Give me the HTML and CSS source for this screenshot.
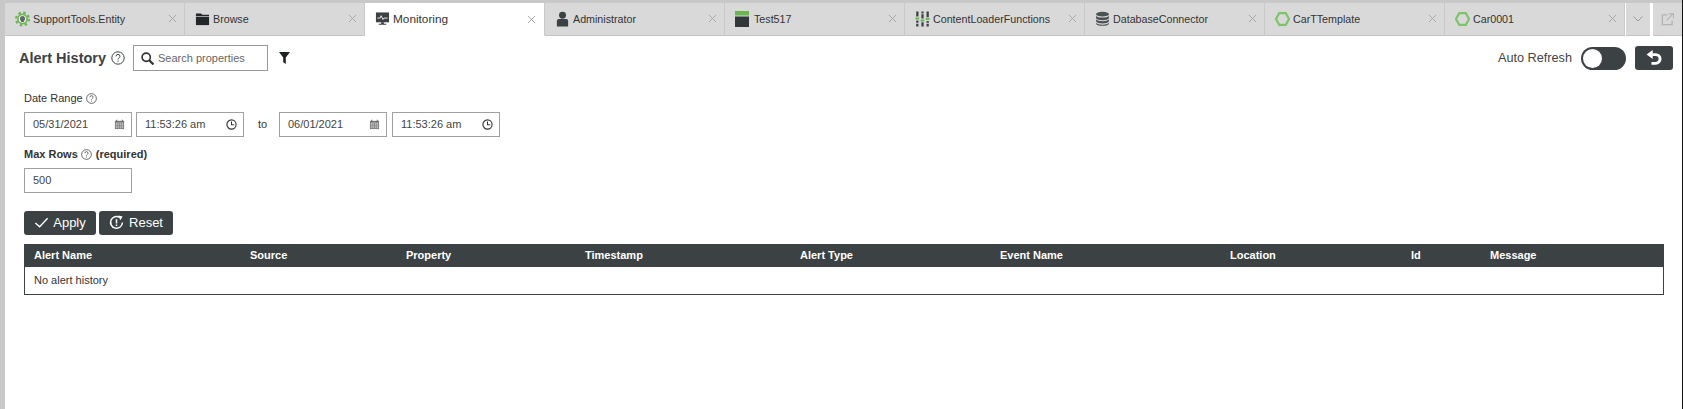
FILE: index.html
```html
<!DOCTYPE html>
<html lang="en">
<head>
<meta charset="utf-8">
<title>Alert History</title>
<link rel="stylesheet" href="styles.css">
</head>
<body>
<svg class="defs" width="0" height="0" aria-hidden="true">
  <symbol id="help" viewBox="0 0 14 14"><circle cx="7" cy="7" r="6.2" fill="none" stroke="currentColor" stroke-width="1"/><path d="M5 5.4a2 2 0 0 1 4 0c0 1.3-2 1.5-2 3" fill="none" stroke="currentColor" stroke-width="1"/><rect x="6.5" y="9.6" width="1" height="1.2" fill="currentColor"/></symbol>
  <symbol id="cal" viewBox="0 0 12 12"><path d="M1 2h10v9H1z" fill="#777"/><path d="M2 4h8v6H2z" fill="#ddd"/><path d="M2 5.500h8M2 7.200h8M2 8.800h8M4 4v6M6 4v6M8 4v6" stroke="#777" stroke-width=".7"/><path d="M3 .8v2M9 .8v2" stroke="#555"/></symbol>
  <symbol id="clock" viewBox="0 0 12 12"><circle cx="6" cy="6" r="5" fill="none" stroke="#333" stroke-width="1.200"/><path d="M6 2.800V6.300H8.800" fill="none" stroke="#333" stroke-width="1.100"/></symbol>
  <symbol id="x" viewBox="0 0 10 10"><path d="M1 1l8 8M9 1l-8 8" stroke="#a8a8a8" stroke-width="1.100" fill="none"/></symbol>
  <symbol id="hex" viewBox="0 0 16 16"><path d="M4.500 1.800h7L15 8l-3.500 6.200h-7L1 8z" fill="none" stroke="#7cc36a" stroke-width="2.300"/></symbol>
</svg>
<div class="tabs">
  <div class="tab"><svg class="ticon" viewBox="0 0 16 16"><circle cx="8" cy="8" r="6.800" fill="none" stroke="#6fb558" stroke-width="2.400" stroke-dasharray="2.700 2.640"/><circle cx="8" cy="8" r="5.800" fill="#6fb558"/><circle cx="8" cy="8" r="4" fill="#eef3ea"/><circle cx="8" cy="7.600" r="2.700" fill="#62686a"/><path d="M6.500 10h3v1.200h-3z" fill="#62686a"/></svg><span class="tname">SupportTools.Entity</span><svg class="tx"><use href="#x"/></svg></div>
  <div class="tab"><svg class="ticon" viewBox="0 0 16 16"><path d="M1 2h5.500l1.200 1.500H15v1.500H1z" fill="#23272a"/><path d="M1 5.800h14v8.700H1z" fill="#23272a"/></svg><span class="tname">Browse</span><svg class="tx"><use href="#x"/></svg></div>
  <div class="tab active"><svg class="ticon" viewBox="0 0 16 16"><path d="M1 1h14v10.500H1z" fill="#3c4244"/><path d="M2.500 7h3l1-2.500 2 4 1-1.500h4" fill="none" stroke="#fff" stroke-width=".9"/><path d="M6.500 11.500h3v1.500h2.500v1H4v-1h2.500z" fill="#3c4244"/></svg><span class="tname">Monitoring</span><svg class="tx"><use href="#x"/></svg></div>
  <div class="tab"><svg class="ticon" viewBox="0 0 16 16"><circle cx="8" cy="4" r="3.700" fill="#3c4244"/><path d="M2 16V10q0-2 2-2h8q2 0 2 2v6z" fill="#3c4244"/></svg><span class="tname">Administrator</span><svg class="tx"><use href="#x"/></svg></div>
  <div class="tab"><svg class="ticon wide" viewBox="0 0 14 16"><path d="M0 0h14v4.500H0z" fill="#6ab64f"/><path d="M0 5.500h14V16H0z" fill="#32383a"/></svg><span class="tname">Test517</span><svg class="tx"><use href="#x"/></svg></div>
  <div class="tab"><svg class="ticon" viewBox="0 0 16 16"><path d="M2.500 0v5.200M2.500 9.500V12M2.500 13v3M8 0v2M8 3v4.500M8 11.500V16M13.500 0v6M13.500 10v2M13.500 13v3" stroke="#3c4244" stroke-width="2.400"/><path d="M.5 7.400h4M6 9.500h4M11.500 8h4" stroke="#6ab64f" stroke-width="2.200"/></svg><span class="tname">ContentLoaderFunctions</span><svg class="tx"><use href="#x"/></svg></div>
  <div class="tab"><svg class="ticon" viewBox="0 0 16 16"><ellipse cx="8" cy="2.800" rx="6.800" ry="2.600" fill="#4b5052"/><path d="M1.200 4.400c1 2.800 12.600 2.800 13.600 0v2.800c-1 2.800-12.600 2.800-13.600 0zM1.200 8.300c1 2.800 12.600 2.800 13.600 0v2.400c-1 2.800-12.600 2.800-13.600 0zM1.200 11.900c1 2.800 12.600 2.800 13.600 0v1.300c-1 2.800-12.600 2.800-13.600 0z" fill="#4b5052"/></svg><span class="tname">DatabaseConnector</span><svg class="tx"><use href="#x"/></svg></div>
  <div class="tab"><svg class="ticon"><use href="#hex"/></svg><span class="tname">CarTTemplate</span><svg class="tx"><use href="#x"/></svg></div>
  <div class="tab"><svg class="ticon"><use href="#hex"/></svg><span class="tname">Car0001</span><svg class="tx"><use href="#x"/></svg></div>
  <div class="tabbtn"><svg class="chev" viewBox="0 0 10 6"><path d="M.5.500 5 5 9.500.5" fill="none" stroke="#999"/></svg></div>
  <div class="tabbtn last"><svg class="pop" viewBox="0 0 14 14"><path d="M7 2H1.500v10.500H12V8" fill="none" stroke="#b4b4b4" stroke-width="1.500"/><path d="M6 8l6.500-6.500M8.500 1h5v5" fill="none" stroke="#b4b4b4" stroke-width="1.200"/></svg></div>
</div>

<main class="content">
  <header class="titlebar">
    <h1 class="title">Alert History</h1>
    <svg class="help big"><use href="#help"/></svg>
    <div class="search">
      <svg class="mag" viewBox="0 0 12 12"><circle cx="4.800" cy="4.800" r="3.800" fill="none" stroke="#333" stroke-width="1.500"/><path d="M7.500 7.500 11.500 11.500" stroke="#333" stroke-width="2"/></svg>
      <span>Search properties</span>
    </div>
    <svg class="filter" viewBox="0 0 11 12"><path d="M0 0h11L6.800 5.500V12L4.200 10.200V5.500z" fill="#1f2324"/></svg>
    <span class="spacer"></span>
    <span class="autolabel">Auto Refresh</span>
    <div class="toggle"><span class="knob"></span></div>
    <button class="iconbtn" type="button"><svg viewBox="0 0 14 14"><path d="M3.800 3.800H8a3.600 3.600 0 0 1 0 7.200H4.500" fill="none" stroke="#fff" stroke-width="2.400"/><path d="M5.500 0v7.500L.5 3.800z" fill="#fff"/></svg></button>
  </header>

  <section class="form">
    <div class="label first">Date Range <svg class="help"><use href="#help"/></svg></div>
    <div class="dates">
      <div class="field">05/31/2021<svg class="ficon"><use href="#cal"/></svg></div>
      <div class="field">11:53:26 am<svg class="ficon"><use href="#clock"/></svg></div>
      <span class="to">to</span>
      <div class="field">06/01/2021<svg class="ficon"><use href="#cal"/></svg></div>
      <div class="field">11:53:26 am<svg class="ficon"><use href="#clock"/></svg></div>
    </div>
    <div class="label second">Max Rows <svg class="help"><use href="#help"/></svg> <span class="req">(required)</span></div>
    <div class="field rows">500</div>
    <div class="actions">
      <button class="btn apply" type="button"><svg viewBox="0 0 16 12"><path d="M1.500 6.500 6 10.500 14.500 1.500" fill="none" stroke="#fff" stroke-width="1.500"/></svg>Apply</button>
      <button class="btn reset" type="button"><svg class="reseticon" viewBox="0 0 16 16"><path d="M11.500 2.600A6.300 6.300 0 1 0 14.300 8" fill="none" stroke="#fff" stroke-width="1.600"/><path d="M10 .5 14.500 1.500 12 5.500z" fill="#fff"/><path d="M8 4.500v4.500M8 10.200v1.500" stroke="#fff" stroke-width="1.600"/></svg>Reset</button>
    </div>
  </section>

  <section class="table">
    <div class="thead">
      <span>Alert Name</span><span>Source</span><span>Property</span><span>Timestamp</span><span>Alert Type</span><span>Event Name</span><span>Location</span><span>Id</span><span>Message</span>
    </div>
    <div class="tbody">No alert history</div>
  </section>
</main>
</body>
</html>
```
FILE: styles.css
```css
* { box-sizing: border-box; }
html, body { height: 100%; }
body {
  margin: 0;
  background: #fff;
  border-left: 5px solid #c8c8c8;
  border-right: 1px solid #111;
  font-family: "Liberation Sans", Arial, sans-serif;
  font-size: 11px;
  color: #333;
  overflow: hidden;
}
.defs { display: block; height: 0; }
.tabs {
  display: flex;
  height: 36px;
  background: #fff;
  border-top: 3px solid #c8c8c8;
}
.tab {
  width: 180px;
  flex: none;
  display: flex;
  align-items: center;
  padding: 0 7px 1px 10px;
  background: #d9d9d9;
  border-right: 1px solid #c9c9c9;
  border-bottom: 1px solid #c4c4c4;
  font-size: 10.7px;
  color: #333;
}
.tab.active { background: #fff; border-bottom-color: #fff; padding: 1px 8px 1px 10px; font-size: 11.8px; }
.ticon { width: 15px; height: 16px; flex: none; margin-right: 3px; }
.ticon.wide { width: 14px; height: 16px; margin-right: 5px; }
.tname { flex: 1; white-space: nowrap; }
.tx { width: 9px; height: 9px; flex: none; }
.tabbtn {
  width: 24px;
  flex: none;
  margin-left: 1px;
  background: #d9d9d9;
  border-bottom: 1px solid #c4c4c4;
  display: flex;
  align-items: center;
  justify-content: center;
}
.tabbtn.last { width: 29px; margin-left: 3px; }
.chev { width: 10px; height: 6px; }
.pop { width: 13px; height: 13px; }
.content { padding: 0 9px 0 15px; }
.titlebar { display: flex; align-items: center; height: 24px; margin-top: 10px; margin-left: -1px; }
.title { margin: 0; font-size: 14.500px; font-weight: bold; color: #3c4244; }
.help { width: 11px; height: 11px; color: #444; vertical-align: -2px; }
.help.big { width: 14px; height: 14px; margin-left: 5px; color: #3c4244; }
.search {
  display: flex;
  align-items: center;
  width: 135px;
  height: 26px;
  margin-left: 8px;
  padding-left: 7px;
  border: 1px solid #999;
  color: #666;
}
.mag { width: 13px; height: 13px; margin-right: 4px; }
.filter { width: 11px; height: 12px; margin-left: 11px; }
.spacer { flex: 1; }
.autolabel { font-size: 12.700px; color: #444; margin-right: 9px; }
.toggle {
  display: flex;
  align-items: center;
  width: 45px;
  height: 23px;
  padding-left: 2px;
  border-radius: 12px;
  background: #3c4244;
}
.knob { width: 19px; height: 19px; border-radius: 50%; background: #fff; }
.iconbtn {
  display: flex;
  align-items: center;
  justify-content: center;
  width: 38px;
  height: 24px;
  margin-left: 9px;
  padding: 0;
  border: 0;
  border-radius: 3px;
  background: #3c4244;
}
.iconbtn svg { width: 17px; height: 17px; }
.form { padding-left: 4px; }
.label { display: flex; align-items: center; gap: 3px; font-size: 11px; color: #333; height: 14px; }
.label.first { margin-top: 21px; }
.label.second { margin-top: 10px; }
.req { font-weight: bold; margin-left: 1px; }
.second { font-weight: 700; }
.dates { display: flex; align-items: center; margin-top: 7px; }
.field {
  display: flex;
  align-items: center;
  justify-content: space-between;
  width: 108px;
  height: 25px;
  padding: 0 6px 1px 8px;
  border: 1px solid #a0a0a0;
  font-size: 11px;
  color: #444;
  margin-right: 4px;
}
.field:nth-child(2) { margin-right: 14px; }
.field:nth-child(4) { margin-right: 5px; }
.ficon { width: 11px; height: 11px; }
.to { width: 21px; font-size: 11px; color: #333; padding-bottom: 1px; }
.rows { margin-top: 7px; height: 25px; }
.actions { display: flex; gap: 3px; margin-top: 18px; }
.btn {
  display: flex;
  align-items: center;
  justify-content: center;
  height: 24px;
  padding: 0 0 1px;
  border: 0;
  border-radius: 3px;
  background: #3c4244;
  color: #fff;
  font: 13px "Liberation Sans", Arial, sans-serif;
}
.btn svg { width: 15px; height: 13px; margin-right: 4px; }
.btn .reseticon { width: 15px; height: 15px; margin-right: 5px; }
.btn.apply { width: 72px; }
.btn.reset { width: 74px; }
.table { margin-left: 4px; width: 1640px; margin-top: 9px; }
.thead {
  display: grid;
  grid-template-columns: 216px 156px 179px 215px 200px 230px 181px 79px 1fr;
  align-items: center;
  height: 23px;
  padding: 0 0 1px 10px;
  background: #3c4244;
  color: #fff;
  font-size: 11px;
  font-weight: bold;
}
.tbody {
  display: flex;
  align-items: center;
  height: 28px;
  padding: 0 0 2px 9px;
  border: 1px solid #3c4244;
  border-top: 0;
  font-size: 11px;
}
```
